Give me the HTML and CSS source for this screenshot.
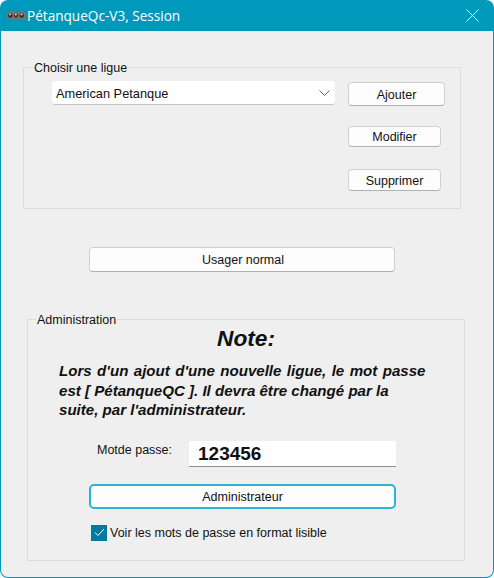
FILE: index.html
```html
<!DOCTYPE html>
<html lang="fr">
<head>
<meta charset="UTF-8" />
<meta name="viewport" content="width=device-width, initial-scale=1" />
<title>PétanqueQc-V3, Session</title>
<link rel="stylesheet" href="styles.css">
</head>
<body>

<div class="window">
  <header class="titlebar">
    <svg class="app-icon" width="18" height="7" viewBox="0 0 18 7">
      <rect width="18" height="7" fill="#77766a"/>
      <circle cx="3.2" cy="3.5" r="2.2" fill="#2b2b2b"/>
      <circle cx="9" cy="3.5" r="2.2" fill="#3a3a36"/>
      <circle cx="14.8" cy="3.5" r="2.2" fill="#2b2b2b"/>
      <circle cx="3" cy="2.4" r="1" fill="#d8d8d0"/>
      <circle cx="8.8" cy="2.4" r="1" fill="#d8d8d0"/>
      <circle cx="14.6" cy="2.4" r="1" fill="#d8d8d0"/>
    </svg>
    <span class="title">PétanqueQc-V3, Session</span>
    <svg class="close" width="13" height="13" viewBox="0 0 13 13">
      <path d="M.5.5l12 12M12.5.5l-12 12" stroke="#fff" stroke-width="1" fill="none"/>
    </svg>
  </header>

  <main class="client">
    <fieldset class="group group-league">
      <legend>Choisir une ligue</legend>
      <div class="league-row">
        <div class="combo">
          <span>American Petanque</span>
          <svg width="11" height="6" viewBox="0 0 11 6">
            <path d="M.5.5l5 5 5-5" stroke="#606060" fill="none"/>
          </svg>
        </div>
        <div class="league-actions">
          <button class="btn btn-add">Ajouter</button>
          <button class="btn btn-edit">Modifier</button>
          <button class="btn btn-delete">Supprimer</button>
        </div>
      </div>
    </fieldset>

    <button class="btn btn-wide btn-normal">Usager normal</button>

    <fieldset class="group group-admin">
      <legend>Administration</legend>
      <h1 class="note-title">Note:</h1>
      <p class="note-text"><span class="note-first">Lors d'un ajout d'une nouvelle ligue, le mot passe</span><br>est [ PétanqueQC ]. Il devra être changé par la<br>suite, par l'administrateur.</p>
      <div class="password-row">
        <label class="password-label">Motde passe:</label>
        <div class="password-input">123456</div>
      </div>
      <button class="btn btn-wide btn-admin">Administrateur</button>
      <div class="check-row">
        <span class="checkbox">
          <svg width="11" height="9" viewBox="0 0 11 9">
            <path d="M1 4.5l3 3 6-6.5" stroke="#fff" stroke-width="1" fill="none"/>
          </svg>
        </span>
        <span>Voir les mots de passe en format lisible</span>
      </div>
    </fieldset>
  </main>
</div>

</body>
</html>
```

FILE: styles.css
```css
/* Reset */
* {
  margin: 0; padding: 0; box-sizing: border-box;
}

body {
  font-family: "Liberation Sans", Arial, sans-serif;
  font-size: 12.5px;
  color: #111;
  background: #fff;
}

.window {
  width: 494px;
  height: 578px;
  display: flex;
  flex-direction: column;
  background: #0099bc;
  border-radius: 8px;
  padding: 0 1px 1px 1px;
  overflow: hidden;
}

/* Title bar */
.titlebar {
  height: 31px;
  flex-shrink: 0;
  display: flex;
  align-items: center;
  padding: 0 14px 0 6px;
  color: #fff;
}

.app-icon {
  margin-right: 2px;
}

.title {
  flex: 1;
  font-family: "Open Sans", sans-serif;
  font-size: 13.6px;
}

/* Client area */
.client {
  flex: 1;
  background: #efefef;
  border-radius: 0 0 7px 7px;
  display: flex;
  flex-direction: column;
}

.group {
  border: 1px solid #dcdcdc;
  width: 438px;
}

.group legend {
  margin-left: 9px;
  padding: 2px 1px 0;
  height: 16px;
  line-height: 14px;
}

.group-league {
  margin: 28px 0 0 22px;
  height: 150px;
}

.league-row {
  display: flex;
  padding: 6px 0 0 28px;
}

.combo {
  width: 283px;
  height: 24px;
  background: #fff;
  border-bottom: 1px solid #c4c4c4;
  border-radius: 3px;
  display: flex;
  align-items: center;
  justify-content: space-between;
  padding: 1px 5px 0 4px;
  font-size: 12.8px;
}

.league-actions {
  margin: 1px 0 0 13px;
  display: flex;
  flex-direction: column;
  align-items: flex-start;
}

.btn {
  font-family: "Liberation Sans", Arial, sans-serif;
  font-size: 12.5px;
  color: #111;
  background: #fdfdfd;
  border: 1px solid #d0d0d0;
  border-bottom-color: #b0b0b0;
  border-radius: 4px;
  padding-top: 1px;
}

.btn-add {
  width: 97px;
  height: 24px;
}

.btn-edit {
  width: 93px;
  height: 21px;
  margin-top: 20px;
}

.btn-delete {
  width: 93px;
  height: 22px;
  margin-top: 22px;
}

.btn-normal {
  width: 306px;
  height: 25px;
  margin: 38px 0 0 88px;
  padding-left: 2px;
}

.group-admin {
  margin: 39px 0 0 26px;
  height: 250px;
}

.group-admin legend {
  margin-left: 8px;
}

.note-title {
  font-size: 22.7px;
  font-style: italic;
  font-weight: 700;
  text-align: center;
  line-height: 25px;
  margin-top: -1px;
}

.note-text {
  font-size: 15.1px;
  font-style: italic;
  font-weight: 700;
  line-height: 19.5px;
  margin: 10px 0 0 31px;
  white-space: nowrap;
}

.note-first {
  word-spacing: 1.2px;
}

.password-row {
  display: flex;
  margin: 21px 0 0 69px;
}

.password-label {
  width: 92px;
  padding-top: 2px;
}

.password-input {
  width: 207px;
  height: 26px;
  background: #fff;
  border-bottom: 1px solid #8f8f8f;
  font-size: 19px;
  font-weight: 700;
  line-height: 26px;
  padding-left: 9px;
}

.btn-admin {
  display: block;
  width: 307px;
  height: 25px;
  margin: 17px 0 0 61px;
  border: 2px solid #2ab4d6;
  border-radius: 5px;
}

.check-row {
  display: flex;
  align-items: center;
  margin: 16px 0 0 63px;
}

.checkbox {
  width: 16px;
  height: 16px;
  margin-right: 3px;
  background: #007a9e;
  display: flex;
  align-items: center;
  justify-content: center;
}
```
